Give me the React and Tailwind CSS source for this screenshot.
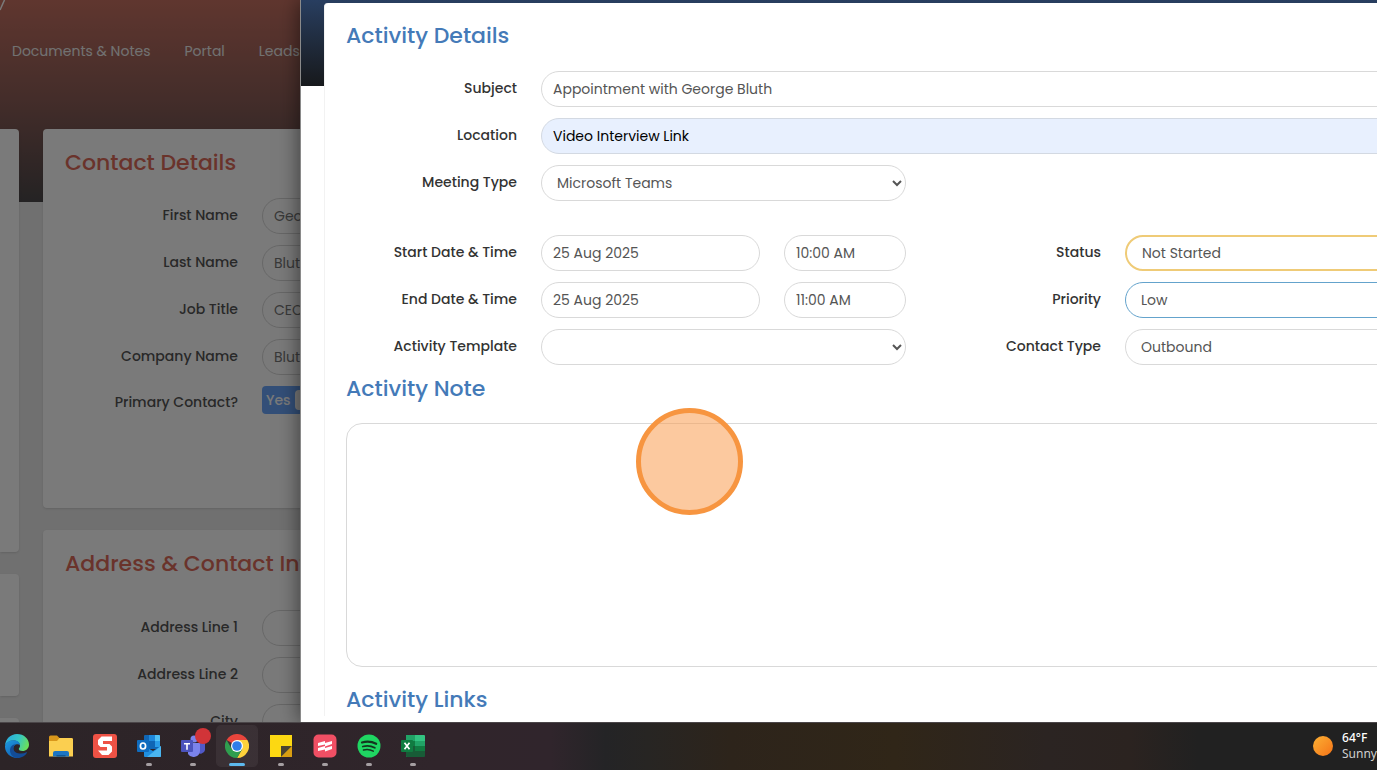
import React from 'react';

const navLinks = ['Documents & Notes', 'Portal', 'Leads'];

const contactFields = [
  { id: 'first-name', label: 'First Name', value: 'George' },
  { id: 'last-name', label: 'Last Name', value: 'Bluth' },
  { id: 'job-title', label: 'Job Title', value: 'CEO' },
  { id: 'company-name', label: 'Company Name', value: 'Bluth Company' },
];

const addressFields = [
  { id: 'address-1', label: 'Address Line 1', value: '' },
  { id: 'address-2', label: 'Address Line 2', value: '' },
  { id: 'city', label: 'City', value: '' },
];

const pill = 'h-9 w-full min-w-0 rounded-full border bg-white text-[14px] text-[#555] outline-none';

function PageField({ id, label, value }) {
  return (
    <div className="flex items-center gap-6">
      <label htmlFor={id} className="w-[173px] shrink-0 pb-0.5 text-right text-[14px] font-medium text-[#555]">
        {label}
      </label>
      <input id={id} defaultValue={value} className="h-9 w-full min-w-0 rounded-full border border-[#d8d8d8] bg-white px-[11px] text-[14px] text-[#777]" />
    </div>
  );
}

function PageCard({ title, children }) {
  return (
    <section className="rounded bg-white px-[22px] pt-4 shadow-sm">
      <h2 className="whitespace-nowrap text-[22px] leading-9 font-medium text-[#dd6c5b]">{title}</h2>
      {children}
    </section>
  );
}

function ContactPage() {
  return (
    <div className="h-full overflow-hidden bg-[#ebebeb]">
      <header className="relative h-[202px] bg-linear-to-b from-[#c87262] via-[#8d5e58] via-50% to-[#4d494b]">
        <svg viewBox="0 0 6 12" className="absolute top-0 left-0 h-3 w-1.5" aria-hidden="true">
          <path d="M4.500 0L0 10" stroke="#fff" strokeWidth="1.500" />
        </svg>
        <nav className="flex gap-[34px] px-3 pt-[39px] text-[14px] leading-6 whitespace-nowrap text-[#eee]">
          {navLinks.map((link) => (
            <a key={link} href="#">{link}</a>
          ))}
        </nav>
      </header>

      <div className="relative -mt-[73px] flex gap-6">
        <div className="flex w-[19px] shrink-0 flex-col gap-[22px]">
          <div className="h-[423px] rounded-r bg-white shadow-sm" />
          <div className="h-[122px] rounded-r bg-white shadow-sm" />
          <div className="h-[122px] rounded-r bg-white shadow-sm" />
        </div>
        <div className="flex min-w-0 flex-1 flex-col gap-[22px]">
          <PageCard title="Contact Details">
            <div className="flex flex-col gap-[11px] pt-[17px] pb-[94px]">
              {contactFields.map((field) => (
                <PageField key={field.id} {...field} />
              ))}
              <div className="flex items-center gap-6">
                <span id="primary-label" className="w-[173px] shrink-0 pt-1 text-right text-[14px] font-medium text-[#555]">
                  Primary Contact?
                </span>
                <button
                  aria-labelledby="primary-label"
                  className="flex h-7 w-[60px] items-center gap-1 rounded bg-[#6ba6fa] px-1 text-[14px] font-medium text-white"
                >
                  Yes
                  <span className="h-5 w-6 shrink-0 rounded bg-white" />
                </button>
              </div>
            </div>
          </PageCard>
          <PageCard title="Address & Contact Information">
            <div className="flex flex-col gap-[11px] pt-7">
              {addressFields.map((field) => (
                <PageField key={field.id} {...field} />
              ))}
            </div>
          </PageCard>
        </div>
      </div>
    </div>
  );
}

function Row({ id, label, children }) {
  return (
    <div className="flex items-center gap-6">
      <label htmlFor={id} className="w-[171px] shrink-0 pb-0.5 text-right text-[14px] font-medium whitespace-nowrap text-[#333]">
        {label}
      </label>
      {children}
    </div>
  );
}

function DateRow({ id, label, date, time }) {
  return (
    <Row id={id} label={label}>
      <input id={id} defaultValue={date} className={`${pill} flex-1 border-[#d9d9d9] px-[11px]`} />
      <input
        aria-label={`${label} (time)`}
        defaultValue={time}
        className="h-9 w-[122px] shrink-0 rounded-full border border-[#d9d9d9] bg-white px-[11px] text-[14px] text-[#555] outline-none"
      />
    </Row>
  );
}

function SectionTitle({ children }) {
  return <h2 className="text-[22px] leading-8 font-medium text-[#447ab8]">{children}</h2>;
}

function ActivityDrawer() {
  return (
    <aside className="absolute inset-y-0 right-0 left-[300px] overflow-hidden border-l border-[#8a8a8a] bg-white shadow-[0_0_20px_rgba(0,0,0,0.55)]">
      <div className="h-[86px] bg-linear-to-b from-[#283e60] to-[#17191c]" />
      <div className="-mt-[83px] ml-[23px] rounded-tl border-l border-[#f2f2f2] bg-white pt-[17px] pl-[21px]">
        <SectionTitle>Activity Details</SectionTitle>
        <form className="-mr-8 flex flex-col pt-[19px]">
          <div className="flex flex-col gap-[11px]">
            <Row id="subject" label="Subject">
              <input id="subject" defaultValue="Appointment with George Bluth" className={`${pill} border-[#d9d9d9] px-[11px]`} />
            </Row>
            <Row id="location" label="Location">
              <input
                id="location"
                defaultValue="Video Interview Link"
                className="h-9 w-full min-w-0 rounded-full border border-[#d3d9e2] bg-[#e8f0fe] px-[11px] text-[14px] text-black outline-none"
              />
            </Row>
            <div className="w-[560px]">
              <Row id="meeting-type" label="Meeting Type">
                <select id="meeting-type" className={`${pill} border-[#d9d9d9] px-[11px] pr-0`}>
                  <option>Microsoft Teams</option>
                </select>
              </Row>
            </div>
          </div>

          <div className="flex gap-6 pt-[34px]">
            <div className="flex w-[560px] shrink-0 flex-col gap-[11px]">
              <DateRow id="start" label="Start Date & Time" date="25 Aug 2025" time="10:00 AM" />
              <DateRow id="end" label="End Date & Time" date="25 Aug 2025" time="11:00 AM" />
              <Row id="template" label="Activity Template">
                <select id="template" className={`${pill} border-[#d9d9d9] pl-[11px]`}>
                  <option></option>
                </select>
              </Row>
            </div>
            <div className="flex min-w-0 flex-1 flex-col gap-[11px]">
              <Row id="status" label="Status">
                <select id="status" className={`${pill} border-2 border-[#efcb77] pl-[11px]`}>
                  <option>Not Started</option>
                </select>
              </Row>
              <Row id="priority" label="Priority">
                <select id="priority" className={`${pill} border-[#64a3cc] pl-[11px]`}>
                  <option>Low</option>
                </select>
              </Row>
              <Row id="contact-type" label="Contact Type">
                <select id="contact-type" className={`${pill} border-[#d9d9d9] pl-[11px]`}>
                  <option>Outbound</option>
                </select>
              </Row>
            </div>
          </div>

          <div className="pt-2">
            <SectionTitle>Activity Note</SectionTitle>
          </div>
          <textarea
            aria-label="Activity Note"
            className="mt-[18px] mb-[17px] h-[244px] resize-none rounded-2xl border border-[#d9d9d9] bg-white p-3 text-[14px] outline-none"
          />
          <SectionTitle>Activity Links</SectionTitle>
        </form>
      </div>
      {/* Click highlight */}
      <div className="absolute top-[408px] left-[335px] size-[107px] rounded-full border-5 border-[#f79540] bg-[#f99d50]/55" />
    </aside>
  );
}

function EdgeIcon() {
  return (
    <svg viewBox="0 0 24 24" className="size-6">
      <defs>
        <linearGradient id="edge-top" x1="0" y1="0.2" x2="1" y2="0.5">
          <stop offset="0" stopColor="#2aa9e0" />
          <stop offset="0.55" stopColor="#35c6c4" />
          <stop offset="1" stopColor="#6be05a" />
        </linearGradient>
        <linearGradient id="edge-side" x1="0" y1="0" x2="0.6" y2="1">
          <stop offset="0" stopColor="#1e9be0" />
          <stop offset="1" stopColor="#1160b5" />
        </linearGradient>
      </defs>
      <path d="M0 11.500C.5 5 5.500 0 12 0c7 0 12 5 12 10.500 0 4-3 6.500-6.500 6.500-2.500 0-3.700-1-3.700-2 0-1 1.200-1.300 1.200-3C15 9 12.500 6.500 8.500 6.500 4.500 6.500 1.500 8.500 0 11.500z" fill="url(#edge-top)" />
      <path d="M0 12c.8-3.500 4.200-5.700 8.500-5.700 3.700 0 6.300 1.900 6.500 4.700-1-.8-2.200-1-3.200-.8C9 10.800 8 13 8.300 15.500 8.700 20 12 23 15.500 23.500 14.500 23.900 13.200 24 12 24 5 24-.3 18.500 0 12z" fill="url(#edge-side)" />
      <path d="M8.300 15c0-2 .9-3.700 2.500-4.500-2.500-.3-5.800 1.500-5.800 6C5 20.500 8.500 24 13 24c3.800 0 7-2 9-5.200.2-.5-.1-.7-.5-.5-5.500 2.500-12.200 1.200-13.200-3.300z" fill="#134c96" />
    </svg>
  );
}

function FolderIcon() {
  return (
    <svg viewBox="0 0 24 24" className="size-6">
      <path d="M0 3a1.500 1.500 0 0 1 1.500-1.500H8L10.500 4H22.500A1.500 1.500 0 0 1 24 5.500V12H0z" fill="#d9971b" />
      <path d="M0 7h8l2.500-3H22.500A1.500 1.500 0 0 1 24 5.500V22.500H0z" fill="#fbcf50" />
      <path d="M4 22.500V19a2 2 0 0 1 2-2h12a2 2 0 0 1 2 2v3.500z" fill="#1b75c4" />
      <path d="M7.500 22.500V21h9v1.500z" fill="#0f5796" />
    </svg>
  );
}

function SnagitIcon() {
  return (
    <svg viewBox="0 0 24 24" className="size-6">
      <rect width="24" height="24" rx="3" fill="#ee5245" />
      <path d="M19 2.500H8.500L5 6v4.500L7.500 13H14v3.500H5L9 21h6.500l3.500-3.500v-5L16.500 10H10V7h9z" fill="#fff" />
    </svg>
  );
}

function OutlookIcon() {
  return (
    <svg viewBox="0 0 24 24" className="size-6">
      <rect x="7" y="1" width="16" height="14" rx="1" fill="#1066b5" />
      <path d="M12 1h6v6h-6z" fill="#1e88dc" />
      <path d="M18 1h4a1 1 0 0 1 1 1v5h-5z" fill="#4fc1f5" />
      <path d="M12 7h6v6h-6z" fill="#1066b5" />
      <path d="M18 7h5v6h-5z" fill="#2a9ce8" />
      <path d="M7 12l9 5 8-5v10a1 1 0 0 1-1 1H8a1 1 0 0 1-1-1z" fill="#1f8fe0" />
      <path d="M24 12v10a1 1 0 0 1-1 1H10z" fill="#4ab6f0" />
      <rect y="6" width="12" height="12" rx="1" fill="#0f6cbf" />
      <ellipse cx="6" cy="12" rx="2.600" ry="3" fill="none" stroke="#fff" strokeWidth="1.700" />
    </svg>
  );
}

function TeamsIcon() {
  return (
    <svg viewBox="0 0 24 24" className="size-6">
      <circle cx="13" cy="5" r="3.500" fill="#7b83eb" />
      <path d="M16 9h7a1 1 0 0 1 1 1v6a4.500 4.500 0 0 1-8 2z" fill="#5059c9" />
      <path d="M7 9h11a1 1 0 0 1 1 1v7a6.500 6.500 0 0 1-12 3z" fill="#7b83eb" />
      <rect y="6" width="12" height="12" rx="1" fill="#4b53bc" />
      <path d="M3 9.800h6M6 9.800v6" stroke="#fff" strokeWidth="1.600" />
    </svg>
  );
}

function ChromeIcon() {
  return (
    <svg viewBox="0 0 24 24" className="size-6">
      <path d="M12 12L1.600 6A12 12 0 0 1 22.400 6z" fill="#e8453c" />
      <path d="M12 6h10.400A12 12 0 0 1 12 24l5.200-9z" fill="#fdd13a" />
      <path d="M1.600 6A12 12 0 0 0 12 24l5.200-9L12 12 6.800 15z" fill="#2f9e4f" />
      <circle cx="12" cy="12" r="6" fill="#fff" />
      <circle cx="12" cy="12" r="4.800" fill="#2f7de9" />
    </svg>
  );
}

function StickyNotesIcon() {
  return (
    <svg viewBox="0 0 24 24" className="size-6">
      <path d="M1 1h22v11L12 23H1z" fill="#fcd812" />
      <path d="M12 12h11L12 23z" fill="#4a4330" />
      <path d="M23 12v11H12z" fill="#d99e12" />
    </svg>
  );
}

function ScribeIcon() {
  return (
    <svg viewBox="0 0 24 24" className="size-6">
      <rect x="0.500" y="0.500" width="23" height="23" rx="5" fill="#f04f64" />
      <path d="M5 9l7-2v2l7-2v3l-7 2.500v-2l-7 1.500z" fill="#fff" />
      <path d="M5 14l7-2v2l7-2v3l-7 2.500v-2l-7 1.500z" fill="#fff" />
    </svg>
  );
}

function SpotifyIcon() {
  return (
    <svg viewBox="0 0 24 24" className="size-6">
      <circle cx="12" cy="12" r="11.500" fill="#1fd662" />
      <g fill="none" stroke="#14351f" strokeLinecap="round">
        <path d="M5 8.500c5-1.500 10-.9 14.200 1.300" strokeWidth="2.200" />
        <path d="M5.800 12.500c4.200-1.200 8.400-.7 12 1.300" strokeWidth="1.800" />
        <path d="M6.500 16c3.500-.9 6.800-.5 9.800 1.200" strokeWidth="1.500" />
      </g>
    </svg>
  );
}

function ExcelIcon() {
  return (
    <svg viewBox="0 0 24 24" className="size-6">
      <path d="M5 1h10v22H6a1 1 0 0 1-1-1z" fill="#21a366" />
      <path d="M14 1h9a1 1 0 0 1 1 1v5H14z" fill="#33c481" />
      <path d="M5 7h10v5H5z" fill="#107c41" />
      <path d="M14 7h10v5H14z" fill="#21a366" />
      <path d="M5 12h10v11H6a1 1 0 0 1-1-1z" fill="#185c37" />
      <path d="M14 12h10v5H14z" fill="#107c41" />
      <path d="M14 17h10v5a1 1 0 0 1-1 1h-9z" fill="#185c37" />
      <rect y="6" width="12" height="12" rx="1" fill="#107c41" />
      <path d="M3.500 8.800l5 6.400M8.500 8.800l-5 6.400" stroke="#fff" strokeWidth="1.700" />
    </svg>
  );
}

const apps = [
  { name: 'Edge', Icon: EdgeIcon },
  { name: 'File Explorer', Icon: FolderIcon },
  { name: 'Snagit', Icon: SnagitIcon },
  { name: 'Outlook', Icon: OutlookIcon, running: true },
  { name: 'Teams', Icon: TeamsIcon, running: true, badge: true },
  { name: 'Chrome', Icon: ChromeIcon, active: true },
  { name: 'Sticky Notes', Icon: StickyNotesIcon, running: true },
  { name: 'Scribe', Icon: ScribeIcon, running: true },
  { name: 'Spotify', Icon: SpotifyIcon, running: true },
  { name: 'Excel', Icon: ExcelIcon, running: true },
];

function Taskbar() {
  return (
    <footer className="flex h-12 shrink-0 items-center justify-between overflow-hidden border-t border-[#4b4649] bg-[linear-gradient(to_right,#2c2427_0%,#30252b_32%,#30252c_40%,#242426_44%,#272523_47%,#2d241b_53%,#302618_65%,#2b2422_76%,#2b2320_82%,#212121_87%)] pb-0.5">
      <div className="-ml-[3px] flex gap-1">
        {apps.map(({ name, Icon, running, active, badge }) => (
          <button
            key={name}
            aria-label={name}
            className={`relative flex h-10 w-10 items-center justify-center rounded ${active ? 'bg-white/6 ring-1 ring-white/6' : ''}`}
          >
            <Icon />
            {badge && <span className="absolute top-0.5 right-0.5 size-4 rounded-full bg-[#d13438]" />}
            {running && <span className="absolute bottom-0 h-[3px] w-1.5 rounded-full bg-[#a59fa2]" />}
            {active && <span className="absolute bottom-0 h-[3px] w-4 rounded-full bg-[#5db9ee]" />}
          </button>
        ))}
      </div>
      <button className="flex items-center gap-[9px] font-['Noto_Sans',sans-serif] text-[12px] leading-4 text-white">
        <span className="size-5 rounded-full bg-linear-to-br from-[#fbb034] to-[#f47216]" />
        <span className="text-left">
          <span className="block font-medium">64°F</span>
          <span className="block text-[#d0d0d0]">Sunny</span>
        </span>
      </button>
    </footer>
  );
}

export default function App() {
  return (
    <div className="flex h-screen flex-col overflow-hidden font-['Poppins','Inter',sans-serif]">
      <main className="relative min-h-0 flex-1 overflow-hidden">
        <ContactPage />
        <div className="absolute inset-0 bg-black/52" />
        <ActivityDrawer />
      </main>
      <Taskbar />
    </div>
  );
}
